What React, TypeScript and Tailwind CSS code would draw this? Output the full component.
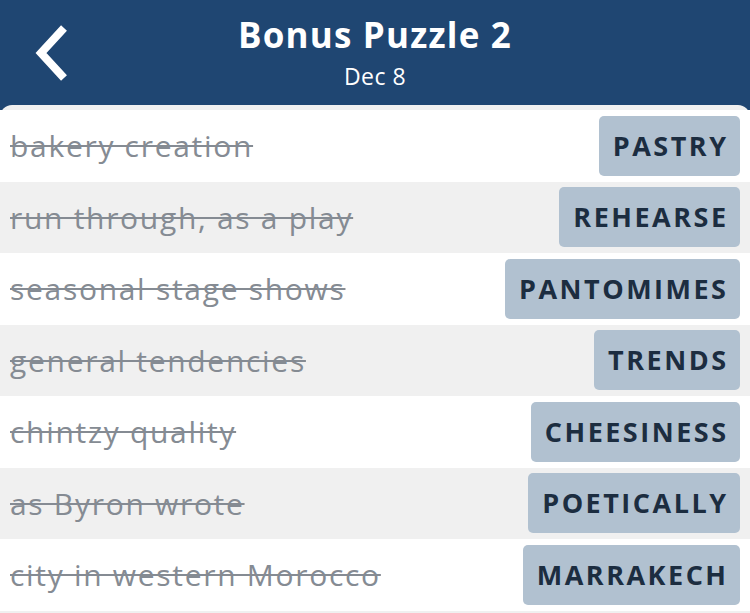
import { ReactNode } from "react";

const rows = [
  { clue: "bakery creation", answer: "PASTRY" },
  { clue: "run through, as a play", answer: "REHEARSE" },
  { clue: "seasonal stage shows", answer: "PANTOMIMES" },
  { clue: "general tendencies", answer: "TRENDS" },
  { clue: "chintzy quality", answer: "CHEESINESS" },
  { clue: "as Byron wrote", answer: "POETICALLY" },
  { clue: "city in western Morocco", answer: "MARRAKECH" },
];

function BackIcon(): ReactNode {
  return (
    <svg width="44" height="60" viewBox="0 0 44 60" fill="none">
      <path d="M34 4 L11 29 L34 54" stroke="white" strokeWidth="8" strokeLinecap="butt" strokeLinejoin="miter" />
    </svg>
  );
}

export default function App() {
  return (
    <div className="h-[613px] w-[750px] overflow-hidden bg-[#1f4672] font-['Open_Sans',sans-serif]">
      <header className="relative flex h-[105px] flex-col items-center pt-[12px] text-white">
        <button className="absolute left-[30px] top-[24px]">
          <BackIcon />
        </button>
        <h1 className="text-[35px] font-bold leading-[46px] tracking-[1.2px]">Bonus Puzzle 2</h1>
        <p className="mt-[5px] text-[23px] leading-[26px] tracking-[0.5px]">Dec 8</p>
      </header>
      <div className="flex h-[508px] flex-col rounded-t-[12px] bg-[#f0f0f0] pt-[5px] [&>*:nth-child(odd)]:bg-white">
        {rows.map((r, i) => (
          <div key={i} className="flex h-[71.5px] shrink-0 items-center justify-between pl-[10px] pr-[10px]">
            <span className="text-[30px] tracking-[1.7px] text-[#858b93] line-through decoration-[2px]">{r.clue}</span>
            <span className="flex h-[60px] items-center rounded-[5px] bg-[#b1c1d0] pl-[14px] pr-[11.5px] text-[27px] font-bold tracking-[2.5px] text-[#1c2d40]">
              {r.answer}
            </span>
          </div>
        ))}
      </div>
    </div>
  );
}
